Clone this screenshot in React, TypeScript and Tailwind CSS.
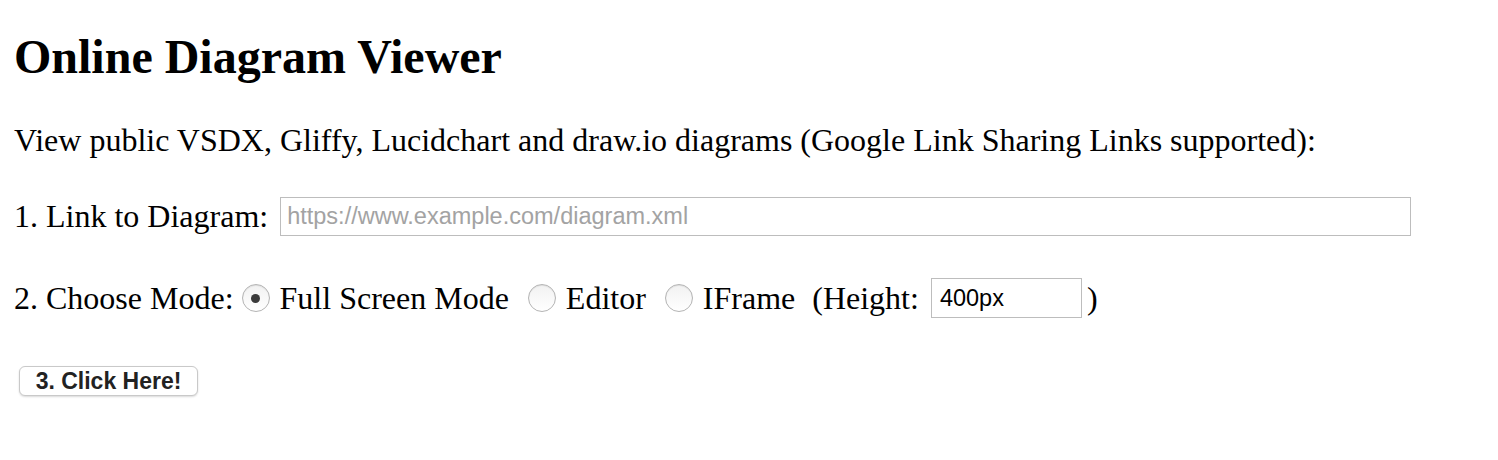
import React from "react";

function Radio({ checked }: { checked?: boolean }) {
  return (
    <span className="flex h-[28px] w-[28px] shrink-0 items-center justify-center rounded-full border border-[#b4b4b4] bg-[linear-gradient(#f2f2f2,#ffffff)] shadow-[inset_0_1px_1px_rgba(0,0,0,0.08)]">
      {checked && <span className="block h-[9px] w-[9px] rounded-full bg-[#3a3a3a]" />}
    </span>
  );
}

export default function App() {
  return (
    <div className="min-h-[460px] bg-white pl-[14px] pt-[29px] font-['Liberation_Serif',serif] text-[32px] text-black">
      <h1 className="text-[48px] font-bold leading-[55px]">Online Diagram Viewer</h1>
      <p className="mt-[38px] leading-[37px]">
        View public VSDX, Gliffy, Lucidchart and draw.io diagrams (Google Link Sharing Links supported):
      </p>
      <div className="mt-[38px] flex h-[39px] items-center">
        <span className="leading-[37px]">1. Link to Diagram:</span>
        <div className="ml-[12px] flex h-[39px] w-[1131px] items-center border border-[#bdbdbd] bg-white pl-[6px] font-['Liberation_Sans',sans-serif] text-[23.5px] text-[#a3a3a3]">
          https://www.example.com/diagram.xml
        </div>
      </div>
      <div className="mt-[42px] flex h-[40px] items-center leading-[37px]">
        <span>2. Choose Mode:</span>
        <div className="ml-[8px] flex items-center"><Radio checked /></div>
        <span className="ml-[10px]">Full Screen Mode</span>
        <div className="ml-[19px] flex items-center"><Radio /></div>
        <span className="ml-[10px]">Editor</span>
        <div className="ml-[19px] flex items-center"><Radio /></div>
        <span className="ml-[10px]">IFrame</span>
        <span className="ml-[17px]">(Height:</span>
        <div className="ml-[12px] flex h-[40px] w-[151px] items-center border border-[#bdbdbd] bg-white pl-[8px] font-['Liberation_Sans',sans-serif] text-[23.5px] text-black">
          400px
        </div>
        <span className="ml-[5px]">)</span>
      </div>
      <div className="mt-[48px] pl-[5px]">
        <button className="flex h-[30px] w-[179px] items-center justify-center rounded-[6px] border border-[#c9c9c9] bg-white font-['Liberation_Sans',sans-serif] text-[23px] font-bold text-[#222] shadow-[0_1px_2px_rgba(0,0,0,0.15)]">
          3. Click Here!
        </button>
      </div>
    </div>
  );
}
